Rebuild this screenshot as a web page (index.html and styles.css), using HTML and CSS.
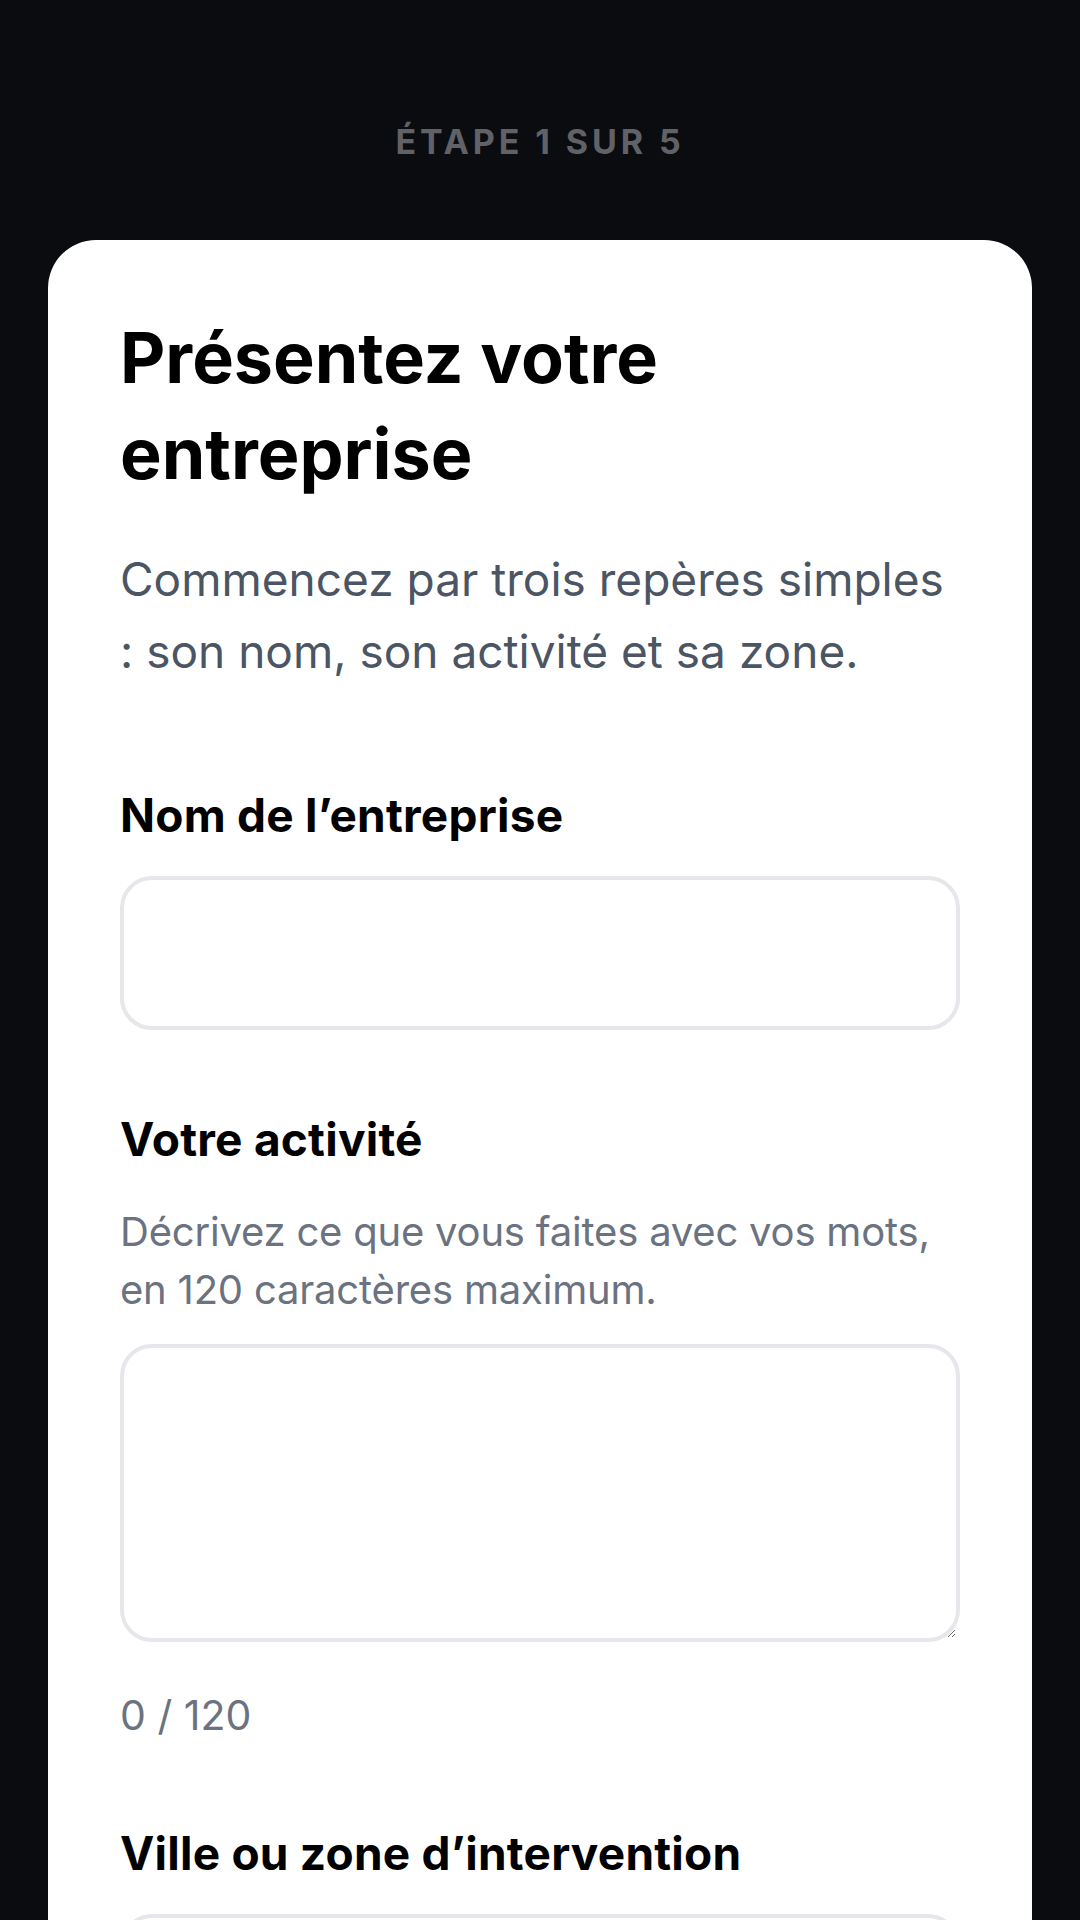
FILE: index.html
```html
<!DOCTYPE html>
<html lang="fr">
<head>
<meta charset="utf-8">
<title>Étape 1 sur 5</title>
<link rel="stylesheet" href="styles.css">
</head>
<body>
<main class="screen">
  <p class="step">Étape 1 sur 5</p>
  <section class="card">
    <h1 class="title">Présentez votre entreprise</h1>
    <p class="intro">Commencez par trois repères simples : son nom, son activité et sa zone.</p>

    <div class="field">
      <label class="label" for="nom">Nom de l’entreprise</label>
      <input class="input" id="nom" type="text">
    </div>

    <div class="field">
      <label class="label" for="activite">Votre activité</label>
      <p class="help">Décrivez ce que vous faites avec vos mots, en 120 caractères maximum.</p>
      <textarea class="textarea" id="activite" maxlength="120"></textarea>
      <p class="counter">0 / 120</p>
    </div>

    <div class="field">
      <label class="label" for="ville">Ville ou zone d’intervention</label>
      <input class="input" id="ville" type="text">
    </div>
  </section>
</main>
</body>
</html>
```
FILE: styles.css
```css
* { box-sizing: border-box; }
html, body { margin: 0; padding: 0; }
body {
  background: #0b0c10;
  font-family: Inter, "Noto Sans", "DejaVu Sans", sans-serif;
  width: 1080px;
  height: 1920px;
  overflow: hidden;
}
.screen {
  display: flex;
  flex-direction: column;
  align-items: center;
  padding: 0 48px;
}
.step {
  margin: 117px 0 0;
  height: 123px;
  font-size: 34px;
  line-height: 50px;
  font-weight: 700;
  letter-spacing: 0.115em;
  text-transform: uppercase;
  color: #616168;
}
.card {
  width: 984px;
  background: #ffffff;
  border-radius: 48px 48px 0 0;
  padding: 70px 72px 200px;
  display: flex;
  flex-direction: column;
}
.title {
  margin: 0;
  font-size: 70px;
  line-height: 96px;
  font-weight: 700;
  letter-spacing: 0;
  color: #000;
}
.intro {
  margin: 41px 0 0;
  font-size: 46px;
  line-height: 72px;
  color: #4b5563;
  letter-spacing: 0;
}
.field {
  display: flex;
  flex-direction: column;
  margin-top: 100px;
}
.field + .field { margin-top: 81px; }
.label {
  font-size: 46px;
  line-height: 57px;
  font-weight: 700;
  letter-spacing: 0.005em;
  color: #000;
}
.input, .textarea {
  display: block;
  width: 100%;
  margin-top: 32px;
  border: 4px solid #e5e7eb;
  border-radius: 32px;
  background: #fff;
  font: inherit;
  outline: none;
}
.input { height: 154px; }
.help {
  margin: 35px 0 0;
  height: 116px;
  font-size: 40px;
  line-height: 58px;
  color: #6b7280;
  letter-spacing: -0.005em;
}
.textarea {
  margin-top: 25px;
  height: 298px;
  resize: vertical;
}
.counter {
  margin: 44px 0 0;
  font-size: 41px;
  line-height: 58px;
  color: #6b7280;
  letter-spacing: 0;
}
```
